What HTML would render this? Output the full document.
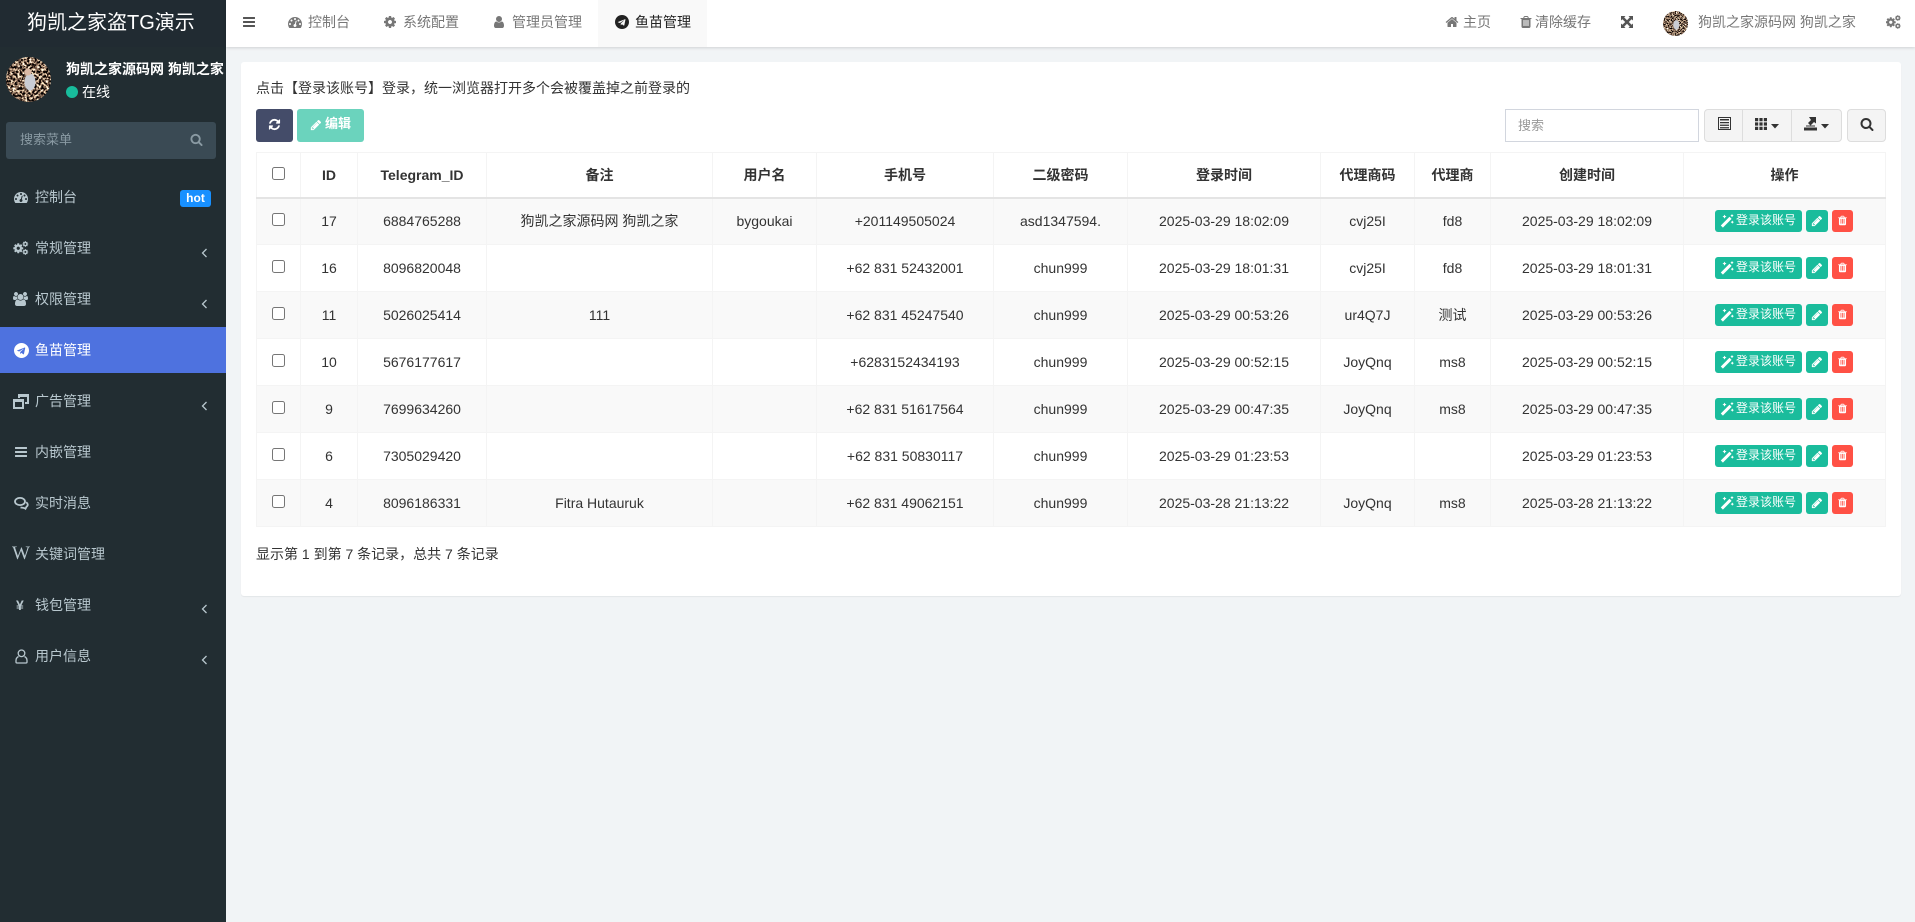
<!DOCTYPE html>
<html lang="zh"><head><meta charset="utf-8"><title>鱼苗管理</title>
<style>
*{box-sizing:border-box}
html,body{margin:0;padding:0;width:1915px;height:922px;overflow:hidden;background:#f1f4f6;font:14px/20px "Liberation Sans","Noto Sans CJK SC",sans-serif;color:#333}
.a{position:absolute;white-space:nowrap}
svg.a{fill:currentColor;overflow:visible}
#side{position:absolute;left:0;top:0;width:226px;height:922px;background:#222d32;color:#b8c7ce}
#top{position:absolute;left:226px;top:0;width:1689px;height:47px;background:#fff;box-shadow:0 1px 3px rgba(0,0,0,.14);color:#777}
#panel{position:absolute;left:241px;top:62px;width:1660px;height:534px;background:#fff;border-radius:3px;box-shadow:0 1px 1px rgba(0,0,0,.06)}
table{position:absolute;left:256px;top:152px;width:1629px;border-collapse:collapse;table-layout:fixed;font-size:14px}
td,th{border:1px solid #f4f4f4;text-align:center;padding:0;height:47px;color:#333;white-space:nowrap;vertical-align:middle}
th{height:45px;border-bottom:2px solid #e4e4e4;font-weight:700}
tbody tr:nth-child(odd) td{background:#f9f9f9}
td input,th input{display:block;margin:0 auto;position:relative;top:-2px;left:0;width:13px;height:13px}
th input{top:-1px}
.ops{position:relative;height:22px;width:137px;margin:0 auto;left:-1px}
.b{position:absolute;top:0;height:22px;border-radius:3px;color:#fff;font-size:12px;line-height:21px}
.b svg{position:absolute;fill:#fff}
.g{background:#1abc9c}.r{background:#ff5145}
.tb{position:absolute;background:#f4f4f4;border:1px solid #ddd;height:33px;top:109px}
</style></head><body>
<svg width="0" height="0" style="position:absolute"><defs>
<symbol id="bars" viewBox="0 0 1792 1792"><path d="M1664 1344v128q0 26-19 45t-45 19H192q-26 0-45-19t-19-45v-128q0-26 19-45t45-19h1408q26 0 45 19t19 45zm0-512v128q0 26-19 45t-45 19H192q-26 0-45-19t-19-45V832q0-26 19-45t45-19h1408q26 0 45 19t19 45zm0-512v128q0 26-19 45t-45 19H192q-26 0-45-19t-19-45V320q0-26 19-45t45-19h1408q26 0 45 19t19 45z"/></symbol>
<symbol id="search" viewBox="0 0 1792 1792"><path d="M1216 832q0-185-131.500-316.500t-316.500-131.500-316.500 131.500-131.500 316.500 131.500 316.500 316.500 131.500 316.500-131.500 131.500-316.500zm512 832q0 52-38 90t-90 38q-54 0-90-38l-343-342q-179 124-399 124-143 0-273.500-55.500t-225-150-150-225-55.500-273.500 55.500-273.500 150-225 225-150 273.500-55.500 273.500 55.500 225 150 150 225 55.500 273.500q0 220-124 399l343 343q37 37 37 90z"/></symbol>
<symbol id="pencil" viewBox="0 0 1792 1792"><path d="M491 1536l91-91-235-235-91 91v107h128v128h107zm523-928q0-22-22-22-10 0-17 7l-542 542q-7 7-7 17 0 22 22 22 10 0 17-7l542-542q7-7 7-17zm-54-192l416 416-832 832h-416v-416zm683 96q0 53-37 90l-166 166-416-416 166-165q36-38 90-38 53 0 91 38l235 234q37 39 37 91z"/></symbol>
<symbol id="trash" viewBox="0 0 1792 1792"><path d="M704 1376v-704q0-14-9-23t-23-9h-64q-14 0-23 9t-9 23v704q0 14 9 23t23 9h64q14 0 23-9t9-23zm256 0v-704q0-14-9-23t-23-9h-64q-14 0-23 9t-9 23v704q0 14 9 23t23 9h64q14 0 23-9t9-23zm256 0v-704q0-14-9-23t-23-9h-64q-14 0-23 9t-9 23v704q0 14 9 23t23 9h64q14 0 23-9t9-23zM672 384h448l-48-117q-7-9-17-11H738q-10 2-17 11zm928 32v64q0 14-9 23t-23 9h-96v948q0 83-47 143.500t-113 60.500H480q-66 0-113-58.500T320 1464V512h-96q-14 0-23-9t-9-23v-64q0-14 9-23t23-9h309l70-167q15-37 54-63t79-26h320q40 0 79 26t54 63l70 167h309q14 0 23 9t9 23z"/></symbol>
<symbol id="refresh" viewBox="0 0 1792 1792"><path d="M1639 1056q0 5-1 7-64 268-268 434.500t-478 166.500q-146 0-282.500-55t-243.500-157l-129 129q-19 19-45 19t-45-19-19-45v-448q0-26 19-45t45-19h448q26 0 45 19t19 45-19 45l-137 137q71 66 161 102t187 36q134 0 250-65t186-179q11-17 53-117 8-23 30-23h192q13 0 22.500 9.500t9.500 22.500zm25-800v448q0 26-19 45t-45 19h-448q-26 0-45-19t-19-45 19-45l138-138q-148-137-349-137-134 0-250 65t-186 179q-11 17-53 117-8 23-30 23h-199q-13 0-22.500-9.500t-9.500-22.500v-7q65-268 270-434.500t480-166.500q146 0 284 55.500t245 156.500l130-129q19-19 45-19t45 19 19 45z"/></symbol>
<symbol id="user" viewBox="0 0 1792 1792"><path d="M1536 1399q0 109-62.500 187t-150.500 78H469q-88 0-150.500-78T256 1399q0-85 8.500-160.500t31.500-152 58.500-131 94-89T583 832q131 128 313 128t313-128q76 0 134.500 34.500t94 89 58.500 131 31.500 152 8.500 160.500zm-256-887q0 159-112.500 271.500T896 896 624.500 783.500 512 512t112.500-271.500T896 128t271.500 112.500T1280 512z"/></symbol>
<symbol id="home" viewBox="0 0 1792 1792"><path d="M1472 992v480q0 26-19 45t-45 19h-384v-384H768v384H384q-26 0-45-19t-19-45V992q0-1 .5-3t.5-3l575-474 575 474q1 2 1 6zm223-69l-62 74q-8 9-21 11h-3q-13 0-21-7L896 424l-692 577q-12 8-24 7-13-2-21-11l-62-74q-8-10-7-23.500t11-21.500l719-599q32-26 76-26t76 26l244 204V288q0-14 9-23t23-9h192q14 0 23 9t9 23v408l219 182q10 8 11 21.500t-7 23.500z"/></symbol>
<symbol id="cog" viewBox="0 0 1792 1792"><path d="M1152 896q0-106-75-181t-181-75-181 75-75 181 75 181 181 75 181-75 75-181zm512-109v222q0 12-8 23t-20 13l-185 28q-19 54-39 91 35 50 107 138 10 12 10 25t-9 23q-27 37-99 108t-94 71q-12 0-26-9l-138-108q-44 23-91 38-16 136-29 186-7 28-36 28H785q-14 0-24.500-8.500T749 1634l-28-184q-49-16-90-37l-141 107q-10 9-25 9-14 0-25-11-126-114-165-168-7-10-7-23 0-12 8-23 15-21 51-66.500t54-70.500q-27-50-41-99l-183-27q-13-2-21-12.500t-8-23.500V783q0-12 8-23t19-13l186-28q14-46 39-92-40-57-107-138-10-12-10-24 0-10 9-23 26-36 98.500-107.500T465 263q13 0 26 10l138 107q44-23 91-38 16-136 29-186 7-28 36-28h222q14 0 24.500 8.500T1043 158l28 184q49 16 90 37l142-107q9-9 24-9 13 0 25 10 129 119 165 170 7 8 7 22 0 12-8 23-15 21-51 66.500t-54 70.500q26 50 41 98l183 28q13 2 21 12.500t8 23.500z"/></symbol>
<symbol id="cogs" viewBox="0 0 1920 1792"><use href="#cog" x="-130" y="190" width="1480" height="1480"/><use href="#cog" x="1090" y="-40" width="850" height="850"/><use href="#cog" x="1090" y="980" width="850" height="850"/></symbol>
<symbol id="dash" viewBox="0 0 1792 1792"><path d="M384 1152q0-53-37.500-90.500T256 1024t-90.500 37.500T128 1152t37.500 90.500T256 1280t90.500-37.500T384 1152zm192-448q0-53-37.500-90.500T448 576t-90.500 37.500T320 704t37.500 90.500T448 832t90.500-37.500T576 704zm428 481l101-382q6-26-7.500-48.500T1059 725t-48 6.500-30 39.500l-101 382q-60 5-107 43.500t-63 98.500q-20 77 20 146t117 89 146-20 89-117q16-60-6-117t-72-91zm660-33q0-53-37.500-90.500T1536 1024t-90.500 37.500T1408 1152t37.500 90.500 90.500 37.500 90.500-37.500T1664 1152zm-640-640q0-53-37.500-90.500T896 384t-90.500 37.500T768 512t37.500 90.500T896 640t90.500-37.500T1024 512zm448 192q0-53-37.500-90.500T1344 576t-90.500 37.500T1216 704t37.500 90.500T1344 832t90.500-37.500T1472 704zm320 448q0 261-141 483-19 29-54 29H195q-35 0-54-29Q0 1414 0 1152q0-182 71-348t191-286 286-191 348-71 348 71 286 191 191 286 71 348z"/></symbol>
<symbol id="users" viewBox="0 0 1920 1792"><path d="M593 896q-162 5-265 128H194q-82 0-138-40.500T0 865q0-353 124-353 6 0 43.500 21t97.500 42.500T384 597q67 0 133-23-5 37-5 66 0 139 81 256zm1071 637q0 120-73 189.500t-194 69.500H523q-121 0-194-69.500T256 1533q0-53 3.500-103.500t14-109T300 1212t43-97.500 62-81 85.500-53.500T602 960q10 0 43 21.500t73 48 107 48 135 21.500 135-21.500 107-48 73-48 43-21.500q61 0 111.500 20t85.500 53.500 62 81 43 97.500 26.500 108.500 14 109 3.500 103.500zM640 256q0 106-75 181t-181 75-181-75-75-181 75-181T384 0t181 75 75 181zm704 384q0 159-112.500 271.500T960 1024 688.500 911.500 576 640t112.500-271.500T960 256t271.500 112.500T1344 640zm576 225q0 78-56 118.500t-138 40.500h-134q-103-123-265-128 81-117 81-256 0-29-5-66 66 23 133 23 59 0 119-21.500t97.500-42.500 43.500-21q124 0 124 353zm-128-609q0 106-75 181t-181 75-181-75-75-181 75-181 181-75 181 75 75 181z"/></symbol>
<symbol id="tg" viewBox="0 0 1792 1792"><path fill-rule="evenodd" d="M1189 1307l147-693q9-44-10.500-63t-51.500-7l-864 333q-29 11-39.500 25t-2.500 26.500 32 19.500l221 69 513-323q21-14 32-6 7 5-4 15l-415 375-16 228q23 0 45-22l108-104 224 165q64 36 81-38zm603-411q0 182-71 348t-191 286-286 191-348 71-348-71-286-191-191-286T0 896t71-348 191-286 286-191T896 0t348 71 286 191 191 286 71 348z"/></symbol>
<symbol id="wand" viewBox="0 0 14 14"><path d="M.8 11.500 9.500 2.800l2.100 2.100-8.700 8.700z"/><path d="M4.500.6l.7 1.300 1.300.7-1.300.7-.7 1.300-.7-1.300-1.300-.7 1.300-.7zM12 0l.6 1 1 .6-1 .6-.6 1-.6-1-1-.6 1-.6zM12.300 6.500l.6 1 1 .6-1 .6-.6 1-.6-1-1-.6 1-.6z"/></symbol>
<filter id="spk" x="0" y="0" width="100%" height="100%" color-interpolation-filters="sRGB"><feTurbulence type="fractalNoise" baseFrequency=".42" numOctaves="2" seed="7"/><feColorMatrix type="matrix" values="3.600 0 0 0 -1.320  3.300 0 0 0 -1.270  2.800 0 0 0 -1.090  0 0 0 0 1"/></filter>
<clipPath id="c45"><circle cx="22.500" cy="22.500" r="22.500"/></clipPath>
</defs></svg>

<div id="side">
<div class="a" style="left:0;top:0;width:226px;height:47px;background:#212b32"></div>
<div class="a" style="left:27px;top:9px;font-size:20px;line-height:28px;color:#fff">狗凯之家盗TG演示</div>
<svg class="a" style="left:6px;top:57px" width="45" height="45" viewBox="0 0 45 45"><g clip-path="url(#c45)"><rect width="45" height="45" filter="url(#spk)"/><ellipse cx="24" cy="25" rx="5.500" ry="8.500" fill="#c9ccd4"/><circle cx="22" cy="15" r="3.500" fill="#d9b8a5"/></g></svg>
<div class="a" style="left:66px;top:59px;color:#fff;font-weight:700">狗凯之家源码网 狗凯之家</div>
<div class="a" style="left:66px;top:86px;width:12px;height:12px;border-radius:50%;background:#18bc9c"></div>
<div class="a" style="left:82px;top:82px;color:#fff">在线</div>
<div class="a" style="left:6px;top:122px;width:210px;height:37px;background:#3a4a54;border-radius:3px"></div>
<div class="a" style="left:20px;top:130px;color:#8a9aa3;font-size:13px">搜索菜单</div>
<svg class="a" style="left:190px;top:133px;color:#8a9aa3" width="13" height="13"><use href="#search"/></svg>

<svg class="a" style="left:14px;top:190px" width="14" height="14"><use href="#dash"/></svg><div class="a" style="left:35px;top:187px">控制台</div>
<div class="a" style="left:180px;top:190px;width:31px;height:17px;background:#1890ff;border-radius:3px;color:#fff;font-weight:700;font-size:12px;line-height:16px;text-align:center">hot</div>

<svg class="a" style="left:13px;top:241px" width="16" height="14"><use href="#cogs"/></svg><div class="a" style="left:35px;top:238px">常规管理</div>
<svg class="a" style="left:201px;top:248px;fill:none;stroke:#b8c7ce;stroke-width:1.300" width="7" height="10"><path d="M5.500 1 1.500 5l4 4"/></svg>

<svg class="a" style="left:13px;top:292px" width="15" height="14"><use href="#users"/></svg><div class="a" style="left:35px;top:289px">权限管理</div>
<svg class="a" style="left:201px;top:299px;fill:none;stroke:#b8c7ce;stroke-width:1.300" width="7" height="10"><path d="M5.500 1 1.500 5l4 4"/></svg>

<div class="a" style="left:0;top:327px;width:226px;height:46px;background:#4e72df"></div>
<svg class="a" style="left:14px;top:343px;color:#fff" width="15" height="15"><use href="#tg"/></svg><div class="a" style="left:35px;top:340px;color:#fff">鱼苗管理</div>

<svg class="a" style="left:13px;top:394px" width="16" height="15" viewBox="0 0 16 15"><path fill-rule="evenodd" d="M5 0h11v10h-4V8h2V3H7v1H5zM0 5h11v10H0zm2 3v5h7V8z"/></svg><div class="a" style="left:35px;top:391px">广告管理</div>
<svg class="a" style="left:201px;top:401px;fill:none;stroke:#b8c7ce;stroke-width:1.300" width="7" height="10"><path d="M5.500 1 1.500 5l4 4"/></svg>

<svg class="a" style="left:14px;top:445px" width="14" height="14"><use href="#bars"/></svg><div class="a" style="left:35px;top:442px">内嵌管理</div>

<svg class="a" style="left:14px;top:497px;fill:none;stroke:#b8c7ce;stroke-width:1.800" width="15" height="13" viewBox="0 0 15 13"><ellipse cx="6" cy="4.500" rx="5" ry="3.600"/><path d="M6.500 10.500c2.500.3 4 .3 5 1.200l1-2c1.800-1.200 1.600-3-.3-4.500" /></svg><div class="a" style="left:35px;top:493px">实时消息</div>

<div class="a" style="left:12px;top:544px;font:19px/20px 'Liberation Serif',serif;color:#b8c7ce">W</div><div class="a" style="left:35px;top:544px">关键词管理</div>

<div class="a" style="left:16px;top:595px;font-weight:700;font-size:14px">¥</div><div class="a" style="left:35px;top:595px">钱包管理</div>
<svg class="a" style="left:201px;top:604px;fill:none;stroke:#b8c7ce;stroke-width:1.300" width="7" height="10"><path d="M5.500 1 1.500 5l4 4"/></svg>

<svg class="a" style="left:15px;top:649px;fill:none;stroke:#b8c7ce;stroke-width:1.300" width="13" height="15" viewBox="0 0 13 15"><circle cx="6.500" cy="4.300" r="3.300"/><path d="M3.500 7.500C2 8.300 1 9.500 1 11.500V13c0 .6.400 1 1 1h9c.6 0 1-.4 1-1v-1.500c0-2-1-3.200-2.500-4"/></svg><div class="a" style="left:35px;top:646px">用户信息</div>
<svg class="a" style="left:201px;top:655px;fill:none;stroke:#b8c7ce;stroke-width:1.300" width="7" height="10"><path d="M5.500 1 1.500 5l4 4"/></svg>
</div>

<div id="top">
<div class="a" style="left:372px;top:0;width:109px;height:47px;background:#f9f9f9"></div>
<svg class="a" style="left:16px;top:15px;color:#555" width="14" height="14"><use href="#bars"/></svg>
<svg class="a" style="left:62px;top:15px" width="14" height="14"><use href="#dash"/></svg><div class="a" style="left:82px;top:12px">控制台</div>
<svg class="a" style="left:157px;top:15px" width="14" height="14"><use href="#cog"/></svg><div class="a" style="left:177px;top:12px">系统配置</div>
<svg class="a" style="left:266px;top:15px" width="14" height="14"><use href="#user"/></svg><div class="a" style="left:286px;top:12px">管理员管理</div>
<svg class="a" style="left:389px;top:15px;color:#222" width="14" height="14"><use href="#tg"/></svg><div class="a" style="left:409px;top:12px;color:#222">鱼苗管理</div>

<svg class="a" style="left:1219px;top:15px" width="14" height="14"><use href="#home"/></svg><div class="a" style="left:1237px;top:12px">主页</div>
<svg class="a" style="left:1293px;top:15px" width="14" height="14"><use href="#trash"/></svg><div class="a" style="left:1309px;top:12px">清除缓存</div>
<svg class="a" style="left:1395px;top:16px;color:#555" width="12" height="12" viewBox="0 0 12 12"><path d="M0 0h4.500L3.200 1.400 6 4.200 8.800 1.400 7.500 0H12v4.500L10.600 3.200 7.800 6l2.800 2.800L12 7.500V12H7.500l1.300-1.400L6 7.800 3.200 10.600 4.500 12H0V7.500l1.400 1.300L4.200 6 1.400 3.200 0 4.500z"/></svg>
<svg class="a" style="left:1437px;top:11px" width="25" height="25" viewBox="0 0 45 45"><g clip-path="url(#c45)"><rect width="45" height="45" filter="url(#spk)"/><ellipse cx="24" cy="25" rx="5.500" ry="8.500" fill="#c9ccd4"/></g></svg>
<div class="a" style="left:1472px;top:12px">狗凯之家源码网 狗凯之家</div>
<svg class="a" style="left:1660px;top:15px" width="15" height="14"><use href="#cogs"/></svg>
</div>

<div id="panel"></div>
<div class="a" style="left:256px;top:78px">点击【登录该账号】登录，统一浏览器打开多个会被覆盖掉之前登录的</div>
<div class="a" style="left:256px;top:109px;width:37px;height:33px;background:#444c69;border-radius:3px"></div>
<svg class="a" style="left:268px;top:118px;color:#fff" width="13" height="13"><use href="#refresh"/></svg>
<div class="a" style="left:297px;top:109px;width:67px;height:33px;background:#6bd3bd;border-radius:3px"></div>
<svg class="a" style="left:310px;top:119px;color:#fff" width="12" height="12"><use href="#pencil"/></svg>
<div class="a" style="left:325px;top:114px;color:#fff;font-size:13px;font-weight:700">编辑</div>

<div class="a" style="left:1505px;top:109px;width:194px;height:33px;background:#fff;border:1px solid #d2d6de"></div>
<div class="a" style="left:1518px;top:116px;color:#999;font-size:13px">搜索</div>
<div class="tb" style="left:1704px;width:39px;border-radius:4px 0 0 4px"></div>
<div class="tb" style="left:1742px;width:50px"></div>
<div class="tb" style="left:1791px;width:51px;border-radius:0 4px 4px 0"></div>
<div class="tb" style="left:1847px;width:39px;border-radius:4px"></div>
<svg class="a" style="left:1718px;top:117px;color:#333" width="13" height="13" viewBox="0 0 13 13"><path fill-rule="evenodd" d="M0 0h13v13H0zm1 1v11h11V1zm1 1h9v1.500H2zm0 3h9v1.300H2zm0 2.600h9v1.300H2zm0 2.500h9V11.400H2z"/></svg>
<svg class="a" style="left:1755px;top:118px;color:#333" width="12" height="12" viewBox="0 0 12 12"><path d="M0 0h3.200v3.200H0zM4.400 0h3.200v3.200H4.400zM8.800 0H12v3.200H8.800zM0 4.400h3.200v3.200H0zM4.400 4.400h3.200v3.200H4.400zM8.800 4.400H12v3.200H8.800zM0 8.800h3.200V12H0zM4.400 8.800h3.200V12H4.400zM8.800 8.800H12V12H8.800z"/></svg>
<svg class="a" style="left:1771px;top:124px;color:#333" width="8" height="5"><path d="M0 0h8L4 4.500z"/></svg>
<svg class="a" style="left:1804px;top:117px;color:#333" width="13" height="14" viewBox="0 0 13 14"><path d="M0 10.500h13V13.500H0zM2 8.500h9v1H2zM5 0h7v6.500L10 5 6.500 8.500 4 6 7 3z"/></svg>
<svg class="a" style="left:1821px;top:124px;color:#333" width="8" height="5"><path d="M0 0h8L4 4.500z"/></svg>
<svg class="a" style="left:1860px;top:117px;color:#333" width="14" height="14"><use href="#search"/></svg>

<table>
<colgroup><col style="width:44px"><col style="width:57px"><col style="width:129px"><col style="width:226px"><col style="width:104px"><col style="width:177px"><col style="width:134px"><col style="width:193px"><col style="width:94px"><col style="width:76px"><col style="width:193px"><col style="width:202px"></colgroup>
<thead><tr><th><input type="checkbox"></th><th>ID</th><th>Telegram_ID</th><th>备注</th><th>用户名</th><th>手机号</th><th>二级密码</th><th>登录时间</th><th>代理商码</th><th>代理商</th><th>创建时间</th><th>操作</th></tr></thead>
<tbody>
<tr><td><input type="checkbox"></td><td>17</td><td>6884765288</td><td>狗凯之家源码网 狗凯之家</td><td>bygoukai</td><td>+201149505024</td><td>asd1347594.</td><td>2025-03-29 18:02:09</td><td>cvj25I</td><td>fd8</td><td>2025-03-29 18:02:09</td><td><div class="ops"><div class="b g" style="left:0;width:87px"><svg style="left:5px;top:4px" width="14" height="14"><use href="#wand"/></svg><span style="position:absolute;left:21px">登录该账号</span></div><div class="b g" style="left:91px;width:22px"><svg style="left:5px;top:5px" width="12" height="12"><use href="#pencil"/></svg></div><div class="b r" style="left:117px;width:21px"><svg style="left:5px;top:5px" width="11" height="11"><use href="#trash"/></svg></div></div></td></tr>
<tr><td><input type="checkbox"></td><td>16</td><td>8096820048</td><td></td><td></td><td>+62 831 52432001</td><td>chun999</td><td>2025-03-29 18:01:31</td><td>cvj25I</td><td>fd8</td><td>2025-03-29 18:01:31</td><td><div class="ops"><div class="b g" style="left:0;width:87px"><svg style="left:5px;top:4px" width="14" height="14"><use href="#wand"/></svg><span style="position:absolute;left:21px">登录该账号</span></div><div class="b g" style="left:91px;width:22px"><svg style="left:5px;top:5px" width="12" height="12"><use href="#pencil"/></svg></div><div class="b r" style="left:117px;width:21px"><svg style="left:5px;top:5px" width="11" height="11"><use href="#trash"/></svg></div></div></td></tr>
<tr><td><input type="checkbox"></td><td>11</td><td>5026025414</td><td>111</td><td></td><td>+62 831 45247540</td><td>chun999</td><td>2025-03-29 00:53:26</td><td>ur4Q7J</td><td>测试</td><td>2025-03-29 00:53:26</td><td><div class="ops"><div class="b g" style="left:0;width:87px"><svg style="left:5px;top:4px" width="14" height="14"><use href="#wand"/></svg><span style="position:absolute;left:21px">登录该账号</span></div><div class="b g" style="left:91px;width:22px"><svg style="left:5px;top:5px" width="12" height="12"><use href="#pencil"/></svg></div><div class="b r" style="left:117px;width:21px"><svg style="left:5px;top:5px" width="11" height="11"><use href="#trash"/></svg></div></div></td></tr>
<tr><td><input type="checkbox"></td><td>10</td><td>5676177617</td><td></td><td></td><td>+6283152434193</td><td>chun999</td><td>2025-03-29 00:52:15</td><td>JoyQnq</td><td>ms8</td><td>2025-03-29 00:52:15</td><td><div class="ops"><div class="b g" style="left:0;width:87px"><svg style="left:5px;top:4px" width="14" height="14"><use href="#wand"/></svg><span style="position:absolute;left:21px">登录该账号</span></div><div class="b g" style="left:91px;width:22px"><svg style="left:5px;top:5px" width="12" height="12"><use href="#pencil"/></svg></div><div class="b r" style="left:117px;width:21px"><svg style="left:5px;top:5px" width="11" height="11"><use href="#trash"/></svg></div></div></td></tr>
<tr><td><input type="checkbox"></td><td>9</td><td>7699634260</td><td></td><td></td><td>+62 831 51617564</td><td>chun999</td><td>2025-03-29 00:47:35</td><td>JoyQnq</td><td>ms8</td><td>2025-03-29 00:47:35</td><td><div class="ops"><div class="b g" style="left:0;width:87px"><svg style="left:5px;top:4px" width="14" height="14"><use href="#wand"/></svg><span style="position:absolute;left:21px">登录该账号</span></div><div class="b g" style="left:91px;width:22px"><svg style="left:5px;top:5px" width="12" height="12"><use href="#pencil"/></svg></div><div class="b r" style="left:117px;width:21px"><svg style="left:5px;top:5px" width="11" height="11"><use href="#trash"/></svg></div></div></td></tr>
<tr><td><input type="checkbox"></td><td>6</td><td>7305029420</td><td></td><td></td><td>+62 831 50830117</td><td>chun999</td><td>2025-03-29 01:23:53</td><td></td><td></td><td>2025-03-29 01:23:53</td><td><div class="ops"><div class="b g" style="left:0;width:87px"><svg style="left:5px;top:4px" width="14" height="14"><use href="#wand"/></svg><span style="position:absolute;left:21px">登录该账号</span></div><div class="b g" style="left:91px;width:22px"><svg style="left:5px;top:5px" width="12" height="12"><use href="#pencil"/></svg></div><div class="b r" style="left:117px;width:21px"><svg style="left:5px;top:5px" width="11" height="11"><use href="#trash"/></svg></div></div></td></tr>
<tr><td><input type="checkbox"></td><td>4</td><td>8096186331</td><td>Fitra Hutauruk</td><td></td><td>+62 831 49062151</td><td>chun999</td><td>2025-03-28 21:13:22</td><td>JoyQnq</td><td>ms8</td><td>2025-03-28 21:13:22</td><td><div class="ops"><div class="b g" style="left:0;width:87px"><svg style="left:5px;top:4px" width="14" height="14"><use href="#wand"/></svg><span style="position:absolute;left:21px">登录该账号</span></div><div class="b g" style="left:91px;width:22px"><svg style="left:5px;top:5px" width="12" height="12"><use href="#pencil"/></svg></div><div class="b r" style="left:117px;width:21px"><svg style="left:5px;top:5px" width="11" height="11"><use href="#trash"/></svg></div></div></td></tr>
</tbody></table>
<div class="a" style="left:256px;top:544px">显示第 1 到第 7 条记录，总共 7 条记录</div>
</body></html>
